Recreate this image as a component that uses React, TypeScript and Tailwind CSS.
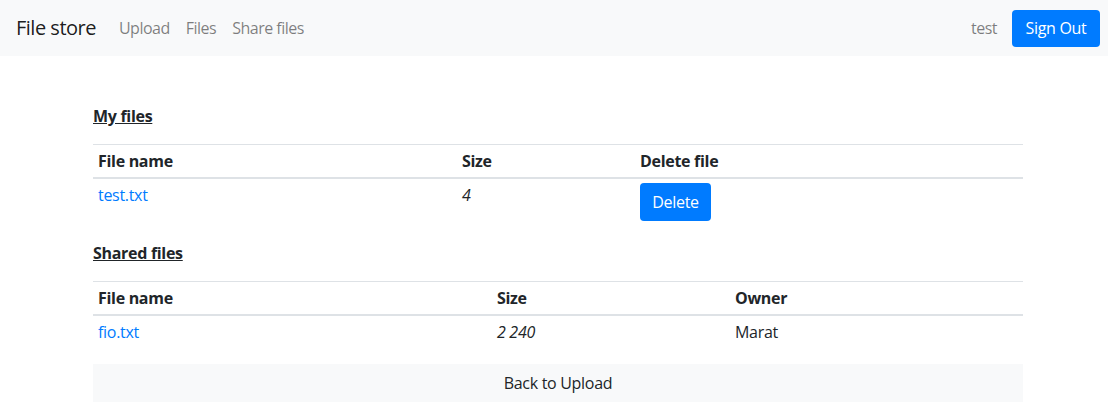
import React from "react";

const font = { fontFamily: '"Open Sans", "Noto Sans", sans-serif' };

const myFiles = [{ name: "test.txt", size: "4" }];
const sharedFiles = [{ name: "fio.txt", size: "2 240", owner: "Marat" }];

const Navbar: React.FC = () => {
  return (
    <nav className="h-14 bg-[#f8f9fa] flex items-center pl-4 pr-2">
      <span className="text-[20px] text-black/90 mr-[23px] tracking-[-0.5px]">File store</span>
      <div className="flex items-center text-[16px] text-black/50 gap-4 tracking-[-0.5px]">
        <a href="#">Upload</a>
        <a href="#">Files</a>
        <a href="#">Share files</a>
      </div>
      <div className="ml-auto flex items-center">
        <span className="text-[16px] text-black/50 mr-[15px] tracking-[-0.5px]">test</span>
        <button className="h-[37px] w-[88px] rounded bg-[#007bff] text-white text-[16px] tracking-[-0.3px]">
          Sign Out
        </button>
      </div>
    </nav>
  );
};

const App: React.FC = () => {
  return (
    <div className="min-h-[419px] bg-white text-[#212529]" style={font}>
      <Navbar />
      <div className="pl-[93px] pt-[48px]">
        <div className="w-[930px]">
          {/* My files */}
          <p className="font-bold underline text-[16px] leading-6 mb-4 tracking-[-0.3px]">My files</p>
          <table className="w-full table-fixed border-collapse text-[16px] leading-6 tracking-[-0.3px] mb-[15px]">
            <colgroup>
              <col className="w-[364px]" />
              <col className="w-[178px]" />
              <col />
            </colgroup>
            <thead>
              <tr className="border-t border-[#dee2e6] border-b-2">
                <th className="text-left font-bold px-[5px] py-[4px]">File name</th>
                <th className="text-left font-bold px-[5px] py-[4px]">Size</th>
                <th className="text-left font-bold px-[5px] py-[4px]">Delete file</th>
              </tr>
            </thead>
            <tbody>
              {myFiles.map((f) => (
                <tr key={f.name}>
                  <td className="align-top px-[5px] py-[4px]">
                    <a href="#" className="text-[#007bff]">{f.name}</a>
                  </td>
                  <td className="align-top px-[5px] py-[4px] italic">{f.size}</td>
                  <td className="align-top px-[5px] pt-[4px] pb-[5px]">
                    <button className="h-[38px] w-[71px] rounded bg-[#007bff] text-white">Delete</button>
                  </td>
                </tr>
              ))}
            </tbody>
          </table>

          {/* Shared files */}
          <p className="font-bold underline text-[16px] leading-6 mb-4 tracking-[-0.3px]">Shared files</p>
          <table className="w-full table-fixed border-collapse text-[16px] leading-6 tracking-[-0.3px] mb-4">
            <colgroup>
              <col className="w-[399px]" />
              <col className="w-[238px]" />
              <col />
            </colgroup>
            <thead>
              <tr className="border-t border-[#dee2e6] border-b-2">
                <th className="text-left font-bold px-[5px] py-[4px]">File name</th>
                <th className="text-left font-bold px-[5px] py-[4px]">Size</th>
                <th className="text-left font-bold px-[5px] py-[4px]">Owner</th>
              </tr>
            </thead>
            <tbody>
              {sharedFiles.map((f) => (
                <tr key={f.name}>
                  <td className="px-[5px] py-[4px]">
                    <a href="#" className="text-[#007bff]">{f.name}</a>
                  </td>
                  <td className="px-[5px] py-[4px] italic">{f.size}</td>
                  <td className="px-[5px] py-[4px]">{f.owner}</td>
                </tr>
              ))}
            </tbody>
          </table>

          <a href="#" className="block h-[38px] bg-[#f8f9fa] text-center leading-[38px] text-[16px] tracking-[-0.3px]">
            Back to Upload
          </a>
        </div>
      </div>
    </div>
  );
};

export default App;
